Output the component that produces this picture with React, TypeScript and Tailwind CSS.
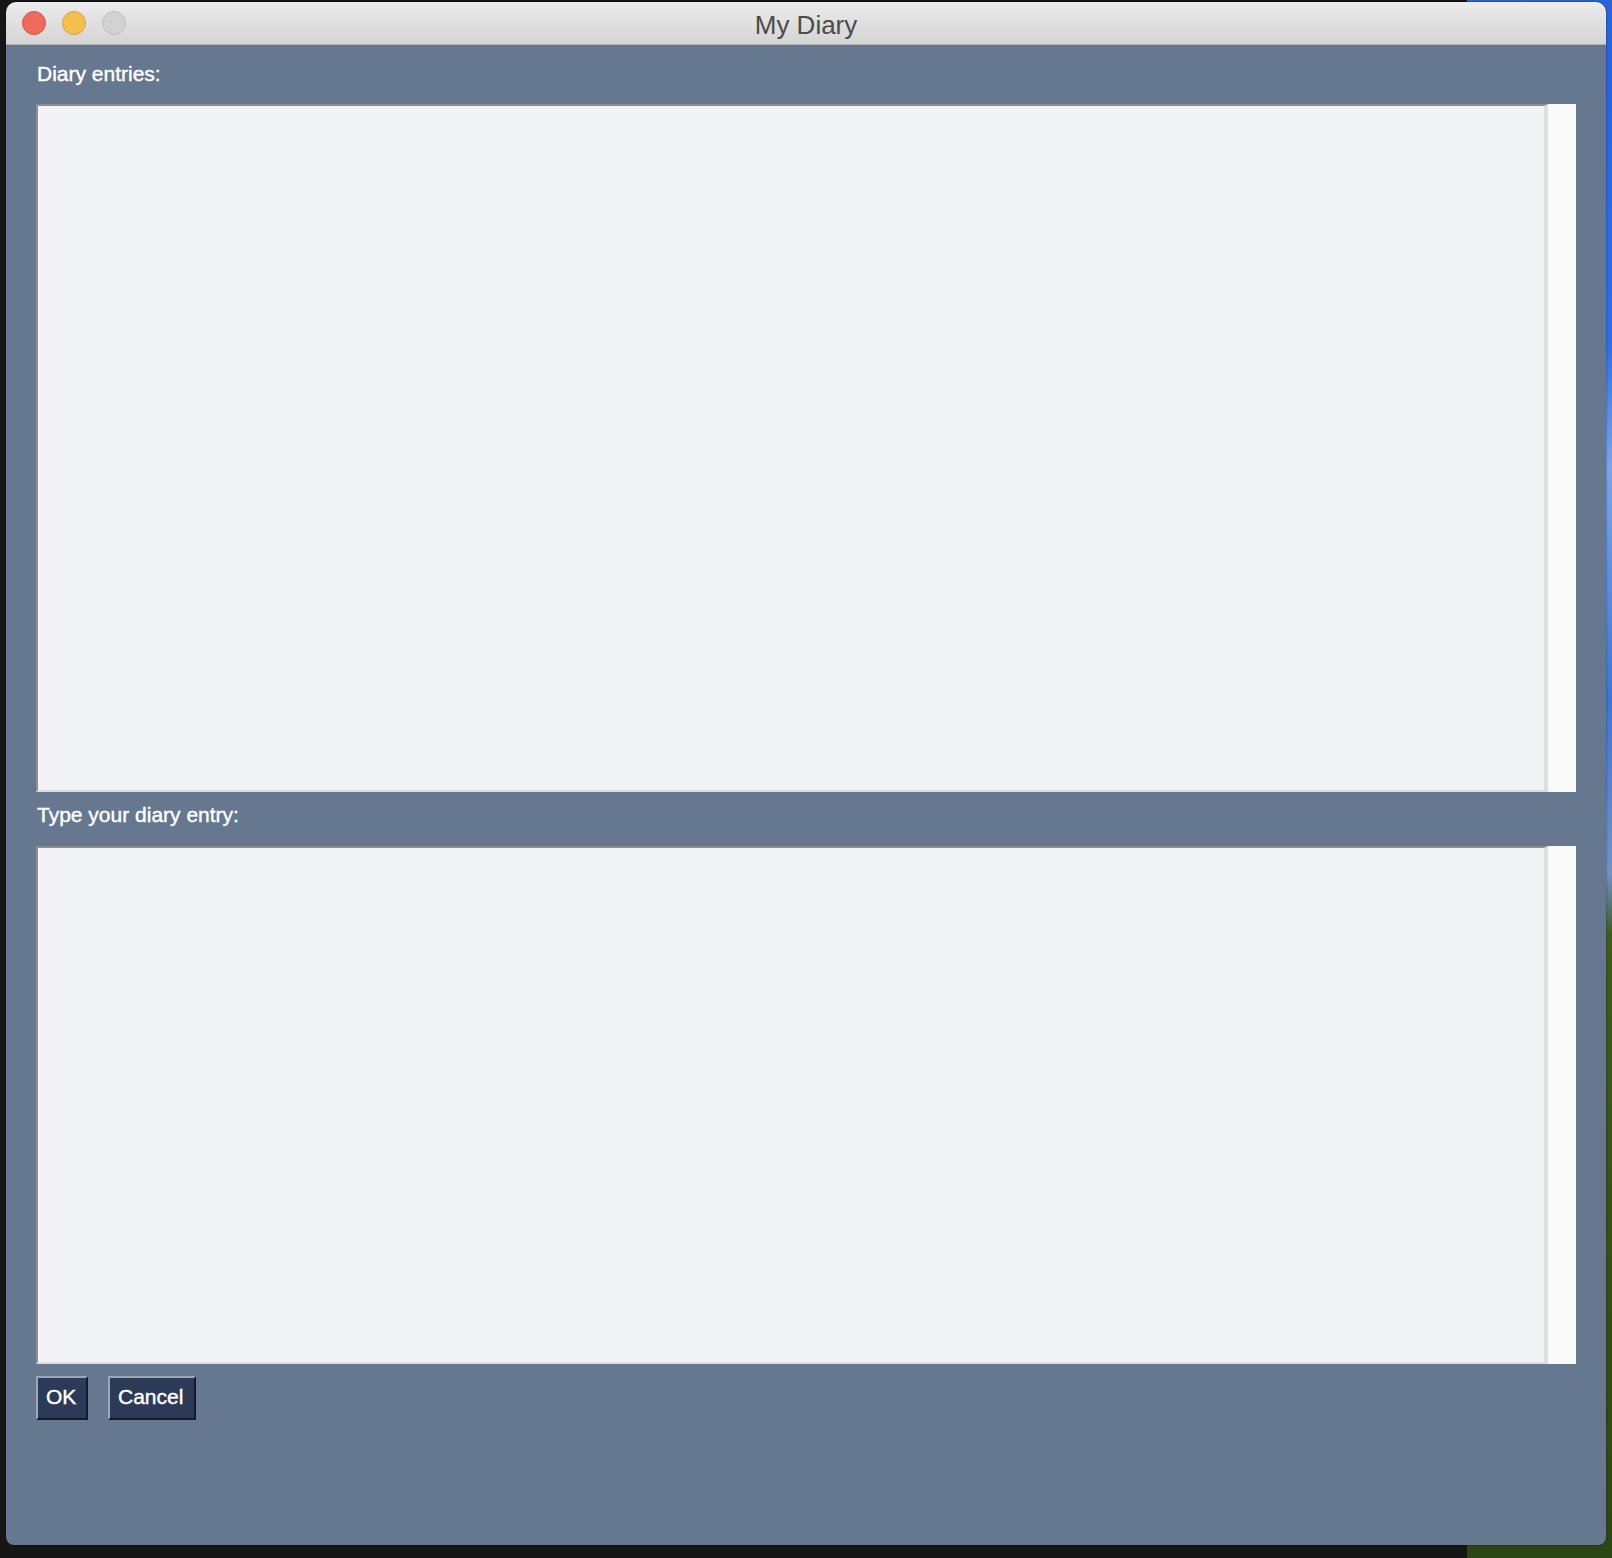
export default function App() {
  return (
    <div className="relative w-[1612px] h-[1558px] overflow-hidden bg-[#161616] font-['Liberation_Sans',Arial,sans-serif]">
      <div className="absolute inset-0 flex">
        <div className="w-[1467px] h-full bg-[#161616]" />
        <div className="flex-1 h-full bg-[linear-gradient(180deg,#2a63d6_0%,#2f6de0_22%,#7aa6e6_30%,#3f74d0_45%,#6f93c8_56%,#3e5a22_60%,#2c4515_100%)]" />
      </div>
      <div className="absolute left-[6px] top-[2px] w-[1600px] h-[1543px] flex flex-col rounded-t-[10px] rounded-b-[8px] overflow-hidden shadow-[0_0_2px_rgba(0,0,0,0.6)]">
        <div className="h-[43px] shrink-0 grid grid-cols-[1fr_auto_1fr] items-center bg-gradient-to-b from-[#ececec] to-[#d4d4d4] border-b border-[#b0b0b0]">
          <div className="flex items-center gap-[16px] pl-[16px]">
            <div className="w-[24px] h-[24px] rounded-full bg-[#ee6a5f] border border-[#d6544a]" />
            <div className="w-[24px] h-[24px] rounded-full bg-[#f5bf4f] border border-[#d9a23c]" />
            <div className="w-[24px] h-[24px] rounded-full bg-[#d2d2d2] border border-[#bdbdbd]" />
          </div>
          <div className="text-[26px] leading-[30px] text-[#4b4b4b] pt-[3px]">My Diary</div>
          <div />
        </div>
        <div className="flex-1 bg-[#667790] px-[30px] pt-[17px] flex flex-col">
          <div className="h-[24px] pl-[1px] leading-[24px] text-[21px] text-white [-webkit-text-stroke:0.4px_white]">Diary entries:</div>
          <div className="mt-[18px] h-[688px] flex">
            <textarea className="flex-1 h-full resize-none outline-none bg-[#f2f3f7] border-2 border-r-4 border-t-[#8e8e8e] border-l-[#8e8e8e] border-r-[#dfdfe1] border-b-[#dcdcde]" />
            <div className="w-[28px] h-full bg-[#fafafa]" />
          </div>
          <div className="mt-[11px] h-[24px] pl-[1px] leading-[24px] text-[21px] text-white [-webkit-text-stroke:0.4px_white]">Type your diary entry:</div>
          <div className="mt-[19px] h-[518px] flex">
            <textarea className="flex-1 h-full resize-none outline-none bg-[#f2f3f7] border-2 border-r-4 border-t-[#8e8e8e] border-l-[#8e8e8e] border-r-[#dfdfe1] border-b-[#dcdcde]" />
            <div className="w-[28px] h-full bg-[#fafafa]" />
          </div>
          <div className="mt-[12px] flex gap-[20px]">
            <button className="w-[52px] h-[44px] flex items-center pl-[8px] pb-[2px] text-[21px] leading-[24px] text-white bg-[#2b3a56] border-2 border-t-[#9ea6b3] border-l-[#9ea6b3] border-r-[#141c2b] border-b-[#141c2b] [-webkit-text-stroke:0.4px_white]">OK</button>
            <button className="w-[88px] h-[44px] flex items-center pl-[8px] pb-[2px] text-[21px] leading-[24px] text-white bg-[#2b3a56] border-2 border-t-[#9ea6b3] border-l-[#9ea6b3] border-r-[#141c2b] border-b-[#141c2b] [-webkit-text-stroke:0.4px_white]">Cancel</button>
          </div>
        </div>
      </div>
    </div>
  );
}
